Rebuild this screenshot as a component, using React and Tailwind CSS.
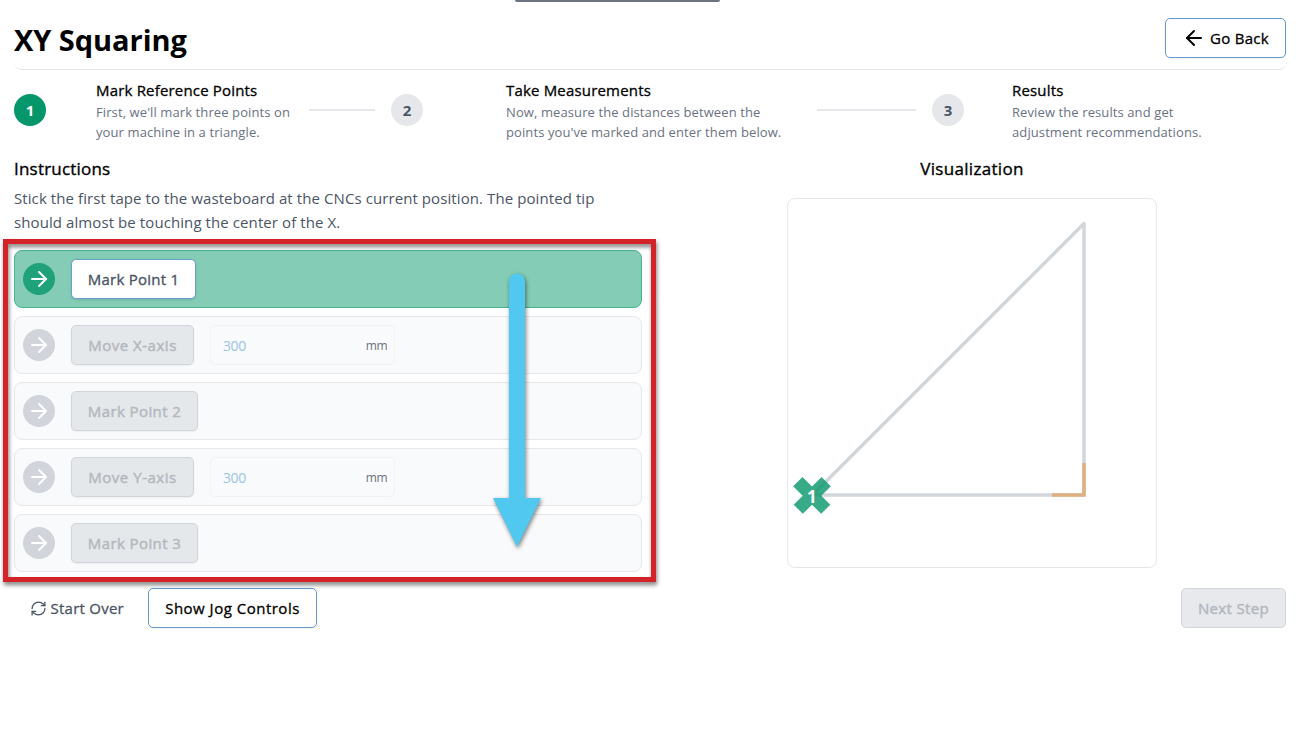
import React from 'react';
import { ArrowLeft, ArrowRight, RefreshCw } from 'lucide-react';

function StepText({ title, lines, className }) {
  return (
    <div className={`flex flex-col pt-[2px] whitespace-nowrap ${className}`}>
      <h3 className="mb-[2px] text-[15px] leading-5 tracking-[0.18px] text-black [-webkit-text-stroke:0.3px]">{title}</h3>
      {lines.map((line) => (
        <p key={line} className="text-[13px] leading-5 tracking-[0.1px] text-gray-500">{line}</p>
      ))}
    </div>
  );
}

function Dot({ n, active }) {
  return (
    <div className={`flex size-8 shrink-0 items-center justify-center rounded-full text-[15px] font-bold ${active ? 'bg-[#059669] text-white' : 'bg-gray-200 text-gray-600'}`}>
      {n}
    </div>
  );
}

function Row({ label, active, width, value, spacing = 'tracking-[0.4px]' }) {
  return (
    <div className={`flex h-[58px] items-center rounded-lg border pl-2 ${active ? 'border-[#47b48f] bg-[#84ccb5]' : 'border-gray-200 bg-[#f9fafb]'}`}>
      <div className={`flex size-8 items-center justify-center rounded-full text-white ${active ? 'bg-[#1fa179]' : 'bg-[#d1d5db]'}`}>
        <ArrowRight size={24} strokeWidth={2} />
      </div>
      <button className={`ml-4 flex h-10 items-center justify-center rounded-[5px] border text-[15px] whitespace-nowrap ${width} ${spacing} ${active ? 'border-[#6a9fd0] bg-white text-gray-600 shadow-sm [-webkit-text-stroke:0.35px]' : 'border-[#d1d5db] bg-[#e5e8eb] text-[#b4b8be] shadow-xs [-webkit-text-stroke:0.45px]'}`}>
        {label}
      </button>
      {value && (
        <div className="ml-4 flex h-10 w-[185px] items-center justify-between rounded-[5px] border border-[#f0f2f4] pr-[7px] pl-3">
          <span className="text-[14px] tracking-[-0.4px] text-[#9cc2e8]">{value}</span>
          <span className="pt-[2px] text-[12px] tracking-[-0.5px] text-gray-500">mm</span>
        </div>
      )}
    </div>
  );
}

function Triangle() {
  return (
    <svg className="mt-[15px] rounded-lg border border-gray-200" width="370" height="370" viewBox="1 1 368 368" fill="none">
      <path d="M25.5 297H297V25.5Z" stroke="#d1d6da" strokeWidth="3.5" strokeLinejoin="round" />
      <path d="M265 297H297V265" stroke="#e0b080" strokeWidth="3.5" />
      <path d="M15.5 279L25 288.500L34.500 279L43.800 288.300L34.300 297.700L43.300 306.700L34.200 315.800L25 306.800L15.800 315.800L6.700 306.700L15.700 297.700L6.200 288.300Z" fill="#059669" fillOpacity="0.8" />
      <text x="24.800" y="304.500" textAnchor="middle" fill="white" className="text-[17px] font-bold">1</text>
    </svg>
  );
}

function ArrowNote() {
  return (
    <svg className="absolute top-[262px] left-[483px] drop-shadow-[1px_2px_2px_rgba(0,0,0,0.5)]" width="70" height="295" fill="#50c8f0">
      <path d="M26 19.500a8 8 0 0 1 16 0V236H58L34 285L10 236H26Z" />
    </svg>
  );
}

export default function App() {
  return (
    <div className="relative h-[731px] w-[1301px] overflow-hidden bg-white px-[14px] font-['Open_Sans',sans-serif]">
      <div className="absolute top-0 left-[515px] h-[2px] w-[205px] rounded-b bg-[#6b7280]" />
      <header className="flex h-[70px] items-start justify-between rounded-lg border-b border-gray-200 pt-[18px]">
        <h1 className="pt-[2px] text-[29px] leading-10 font-bold tracking-[-0.05px] text-black">XY Squaring</h1>
        <button className="mr-[1px] flex h-10 w-[121px] items-center justify-center gap-1 rounded-[5px] border border-[#6398d0] text-[15px] tracking-[0.3px] shadow-xs [-webkit-text-stroke:0.3px]">
          <ArrowLeft size={24} strokeWidth={2} />
          <span>Go Back</span>
        </button>
      </header>

      <section className="flex h-20 items-center">
        <Dot n="1" active />
        <StepText className="ml-[50px] w-[213px]" title="Mark Reference Points" lines={["First, we'll mark three points on", 'your machine in a triangle.']} />
        <div className="h-[2px] w-[66px] bg-gray-200" />
        <div className="ml-4"><Dot n="2" /></div>
        <StepText className="ml-[83px] w-[311px]" title="Take Measurements" lines={['Now, measure the distances between the', "points you've marked and enter them below."]} />
        <div className="h-[2px] w-[99px] bg-gray-200" />
        <div className="ml-4"><Dot n="3" /></div>
        <StepText className="ml-12" title="Results" lines={['Review the results and get', 'adjustment recommendations.']} />
      </section>

      <main className="flex pt-[5px]">
        <section className="w-[628px]">
          <h2 className="text-[17px] leading-7 tracking-[0.2px] [-webkit-text-stroke:0.35px]">Instructions</h2>
          <p className="mt-[3px] h-16 text-[15px] leading-6 tracking-[0.088px] whitespace-nowrap text-gray-600">
            Stick the first tape to the wasteboard at the CNCs current position. The pointed tip<br />
            should almost be touching the center of the X.
          </p>
          <div className="flex flex-col gap-2">
            <Row label="Mark Point 1" active width="w-[125px]" spacing="tracking-[0.25px]" />
            <Row label="Move X-axis" width="w-[123px]" value="300" spacing="tracking-[0.52px]" />
            <Row label="Mark Point 2" width="w-[127px]" />
            <Row label="Move Y-axis" width="w-[123px]" value="300" spacing="tracking-[0.52px]" />
            <Row label="Mark Point 3" width="w-[127px]" />
          </div>
        </section>
        <section className="ml-[145px] flex w-[370px] flex-col items-center">
          <h2 className="text-[17px] leading-7 tracking-[0.3px] [-webkit-text-stroke:0.35px]">Visualization</h2>
          <Triangle />
        </section>
      </main>

      <footer className="flex items-center pt-4 pr-[1px] text-[15px] whitespace-nowrap [-webkit-text-stroke:0.3px]">
        <button className="flex h-10 w-[134px] items-center gap-1 pl-[15.5px] tracking-[0.25px] text-gray-600">
          <RefreshCw size={17} strokeWidth={1.8} />
          Start Over
        </button>
        <button className="flex h-10 w-[169px] items-center justify-center rounded-[5px] border border-[#6398d0] tracking-[0.5px] shadow-xs">Show Jog Controls</button>
        <button className="ml-auto flex h-10 w-[105px] items-center justify-center rounded-[5px] border border-[#d1d5db] bg-[#e7e9ed] tracking-[0.35px] text-[#b4b8be] [-webkit-text-stroke:0.45px]">Next Step</button>
      </footer>

      <div className="absolute top-[239px] left-[3px] h-[343px] w-[653px] border-[5px] border-[#d32329] drop-shadow-[1px_3px_2px_rgba(0,0,0,0.5)]" />
      <ArrowNote />
    </div>
  );
}
